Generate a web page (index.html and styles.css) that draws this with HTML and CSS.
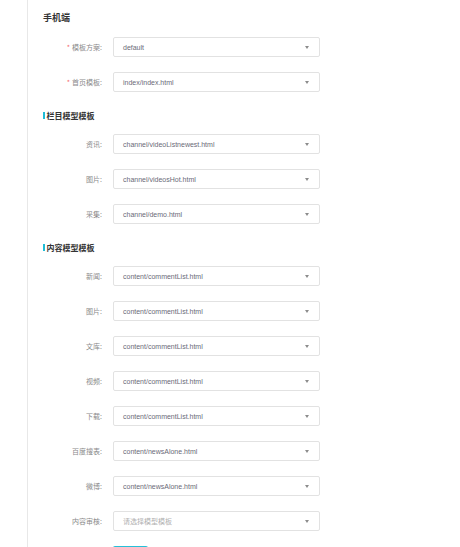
FILE: index.html
```html
<!DOCTYPE html>
<html lang="zh">
<head>
<meta charset="utf-8">
<title>模板设置</title>
<link rel="stylesheet" href="styles.css">
</head>
<body>
<div class="page">
  <div class="panel">
    <h2 class="title">手机端</h2>

    <div class="row"><label class="label"><span class="req">*</span>模板方案:</label><div class="select"><span class="val">default</span><i class="arrow"></i></div></div>
    <div class="row"><label class="label"><span class="req">*</span>首页模板:</label><div class="select"><span class="val">index/index.html</span><i class="arrow"></i></div></div>

    <h3 class="section">栏目模型模板</h3>
    <div class="row"><label class="label">资讯:</label><div class="select"><span class="val">channel/videoListnewest.html</span><i class="arrow"></i></div></div>
    <div class="row"><label class="label">图片:</label><div class="select"><span class="val">channel/videosHot.html</span><i class="arrow"></i></div></div>
    <div class="row"><label class="label">采集:</label><div class="select"><span class="val">channel/demo.html</span><i class="arrow"></i></div></div>

    <h3 class="section">内容模型模板</h3>
    <div class="row"><label class="label">新闻:</label><div class="select"><span class="val">content/commentList.html</span><i class="arrow"></i></div></div>
    <div class="row"><label class="label">图片:</label><div class="select"><span class="val">content/commentList.html</span><i class="arrow"></i></div></div>
    <div class="row"><label class="label">文库:</label><div class="select"><span class="val">content/commentList.html</span><i class="arrow"></i></div></div>
    <div class="row"><label class="label">视频:</label><div class="select"><span class="val">content/commentList.html</span><i class="arrow"></i></div></div>
    <div class="row"><label class="label">下载:</label><div class="select"><span class="val">content/commentList.html</span><i class="arrow"></i></div></div>
    <div class="row"><label class="label">百度搜表:</label><div class="select"><span class="val">content/newsAlone.html</span><i class="arrow"></i></div></div>
    <div class="row"><label class="label">微博:</label><div class="select"><span class="val">content/newsAlone.html</span><i class="arrow"></i></div></div>
    <div class="row"><label class="label">内容审核:</label><div class="select"><span class="val placeholder">请选择模型模板</span><i class="arrow"></i></div></div>

    <div class="actions"><button class="btn">保存</button></div>
  </div>
</div>
</body>
</html>
```
FILE: styles.css
```css
html, body {
  margin: 0;
  padding: 0;
  background: #fff;
  overflow: hidden;
}
body {
  font-family: "Liberation Sans", "Noto Sans CJK SC", sans-serif;
  color: #333;
}
.page {
  padding-left: 27px;
}
.panel {
  border-left: 1px solid #e8e8e8;
  min-height: 600px;
  padding-left: 15px;
}
.title {
  margin: 0;
  padding-top: 11px;
  font-family: "Noto Sans CJK SC", sans-serif;
  font-size: 9px;
  line-height: 13px;
  font-weight: bold;
  color: #333;
  margin-bottom: 13px;
}
.row {
  display: flex;
  align-items: center;
  height: 20px;
  margin-bottom: 15px;
  margin-left: -15px;
}
.label {
  width: 74px;
  flex: none;
  text-align: right;
  font-family: "Noto Sans CJK SC", sans-serif;
  font-size: 7px;
  color: #8a8a8a;
  margin-right: 11px;
}
.req {
  color: #f56c6c;
  margin-right: 2px;
}
.select {
  flex: none;
  box-sizing: border-box;
  width: 207px;
  height: 20px;
  border: 1px solid #e2e2e2;
  border-radius: 2px;
  display: flex;
  align-items: center;
  padding: 0 10px 0 9px;
}
.val {
  flex: 1;
  font-size: 7px;
  color: #6a6a78;
  white-space: nowrap;
}
.val.placeholder {
  font-family: "Noto Sans CJK SC", sans-serif;
  color: #b0b0b0;
}
.arrow {
  width: 0;
  height: 0;
  border-left: 2.5px solid transparent;
  border-right: 2.5px solid transparent;
  border-top: 3px solid #8c8c8c;
}
.section {
  margin: 0 0 12px 0;
  padding-top: 2px;
  height: 13px;
  font-family: "Noto Sans CJK SC", sans-serif;
  font-size: 8px;
  line-height: 13px;
  font-weight: bold;
  color: #333;
  display: flex;
  align-items: center;
}
.section::before {
  content: "";
  width: 1.5px;
  height: 7px;
  background: #1fbcd6;
  margin-right: 2px;
}
.actions {
  padding-left: 70px;
}
.btn {
  display: block;
  width: 35px;
  height: 20px;
  border: 0;
  border-radius: 2px;
  background: #26c0d8;
  color: #fff;
  font-family: "Noto Sans CJK SC", sans-serif;
  font-size: 7px;
  padding: 0;
}
```
